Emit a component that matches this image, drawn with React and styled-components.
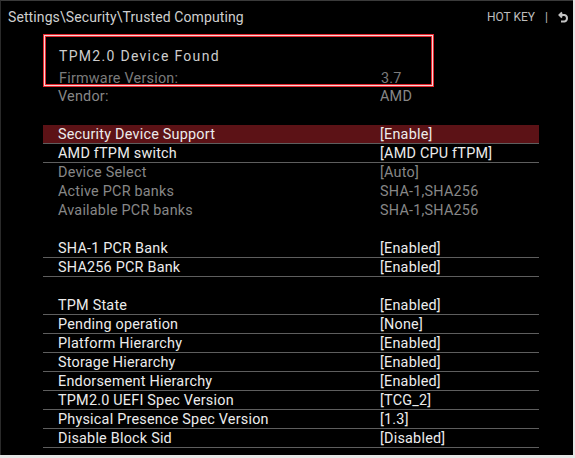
import React from "react";
import styled, { createGlobalStyle } from "styled-components";

const Global = createGlobalStyle`
  html, body { margin: 0; padding: 0; background: #e6e6e6; }
  *, *::before, *::after { box-sizing: border-box; }
  body { font-family: Roboto, "Liberation Sans", sans-serif; }
`;

const Screen = styled.div`
  width: 573px;
  height: 455px;
  background: #000;
  border-top: 1px solid #3a3a3a;
  border-left: 1px solid #2a2a2a;
  display: flex;
  flex-direction: column;
  overflow: hidden;
`;

const Header = styled.div`
  height: 33px;
  flex: none;
  display: flex;
  align-items: center;
  justify-content: space-between;
  padding: 0 4px 0 7px;
`;

const Crumb = styled.div`
  color: #cfcfcf;
  font-size: 14px;
  letter-spacing: 0.1px;
  margin-top: -1px;
`;

const HotKey = styled.div`
  display: flex;
  align-items: center;
  gap: 10px;
  color: #bdbdbd;
  font-size: 12px;
  margin-top: -1px;
`;

const Body = styled.div`
  margin-left: 42px;
  width: 496px;
  display: flex;
  flex-direction: column;
`;

const InfoBox = styled.div`
  width: 391px;
  height: 53px;
  flex: none;
  border: 1px solid #e5262e;
  box-shadow: inset 0 0 0 1px #f3d6d6, inset 0 0 0 2px #e5262e;
  padding: 10px 0 0 14px;
  display: flex;
  flex-direction: column;
`;

const Found = styled.div`
  color: #cdcdcd;
  font-size: 14px;
  letter-spacing: 1.3px;
  height: 22px;
  line-height: 22px;
  margin-left: 1px;
`;

const Row = styled.div`
  display: grid;
  grid-template-columns: 322px 1fr;
  height: 19px;
  flex: none;
  line-height: 20px;
  padding-left: 15px;
  font-size: 14.4px;
  letter-spacing: 0.22px;
  color: ${p => (p.$muted ? "#878787" : p.$dim ? "#7b7b7b" : "#ececec")};
  background: ${p => (p.$active ? "#5c1216" : "transparent")};
  border-bottom: ${p => (p.$line ? "1px solid #5e5e5e" : "none")};
  white-space: nowrap;
`;

const InBoxRow = styled(Row)`
  padding-left: 1px;
  height: 19px;
  line-height: 23px;
`;

const Spacer = styled.div`
  height: ${p => p.$h}px;
  flex: none;
`;

const UndoIcon = () => (
  <svg width="11" height="12" viewBox="0 0 11 12" fill="none" stroke="#c4c4c4" strokeWidth="2">
    <path d="M4 1.5 L1.5 4 L4 6.5" strokeLinejoin="miter" />
    <path d="M1.5 4 H6.5 A3 3.3 0 0 1 6.5 10.5 H3" />
  </svg>
);

const items = [
  { l: "Security Device Support", v: "[Enable]", active: true, line: true },
  { l: "AMD fTPM switch", v: "[AMD CPU fTPM]", line: true },
  { l: "Device Select", v: "[Auto]", muted: true },
  { l: "Active PCR banks", v: "SHA-1,SHA256", muted: true },
  { l: "Available PCR banks", v: "SHA-1,SHA256", muted: true },
  { spacer: 19 },
  { l: "SHA-1 PCR Bank", v: "[Enabled]", line: true },
  { l: "SHA256 PCR Bank", v: "[Enabled]", line: true },
  { spacer: 19 },
  { l: "TPM State", v: "[Enabled]", line: true },
  { l: "Pending operation", v: "[None]", line: true },
  { l: "Platform Hierarchy", v: "[Enabled]", line: true },
  { l: "Storage Hierarchy", v: "[Enabled]", line: true },
  { l: "Endorsement Hierarchy", v: "[Enabled]", line: true },
  { l: "TPM2.0 UEFI Spec Version", v: "[TCG_2]", line: true },
  { l: "Physical Presence Spec Version", v: "[1.3]", line: true },
  { l: "Disable Block Sid", v: "[Disabled]", line: true },
];

export default function App() {
  return (
    <>
      <Global />
      <Screen>
        <Header>
          <Crumb>Settings\Security\Trusted Computing</Crumb>
          <HotKey>
            <span>HOT KEY</span>
            <span>|</span>
            <UndoIcon />
          </HotKey>
        </Header>
        <Body>
          <InfoBox>
            <Found>TPM2.0 Device Found</Found>
            <InBoxRow $dim>
              <span>Firmware Version:</span>
              <span>3.7</span>
            </InBoxRow>
          </InfoBox>
          <Row $muted>
            <span>Vendor:</span>
            <span>AMD</span>
          </Row>
          <Spacer $h={19} />
          {items.map((it, i) =>
            it.spacer ? (
              <Spacer key={i} $h={it.spacer} />
            ) : (
              <Row key={i} $active={it.active} $line={it.line} $muted={it.muted}>
                <span>{it.l}</span>
                <span>{it.v}</span>
              </Row>
            )
          )}
        </Body>
      </Screen>
    </>
  );
}
